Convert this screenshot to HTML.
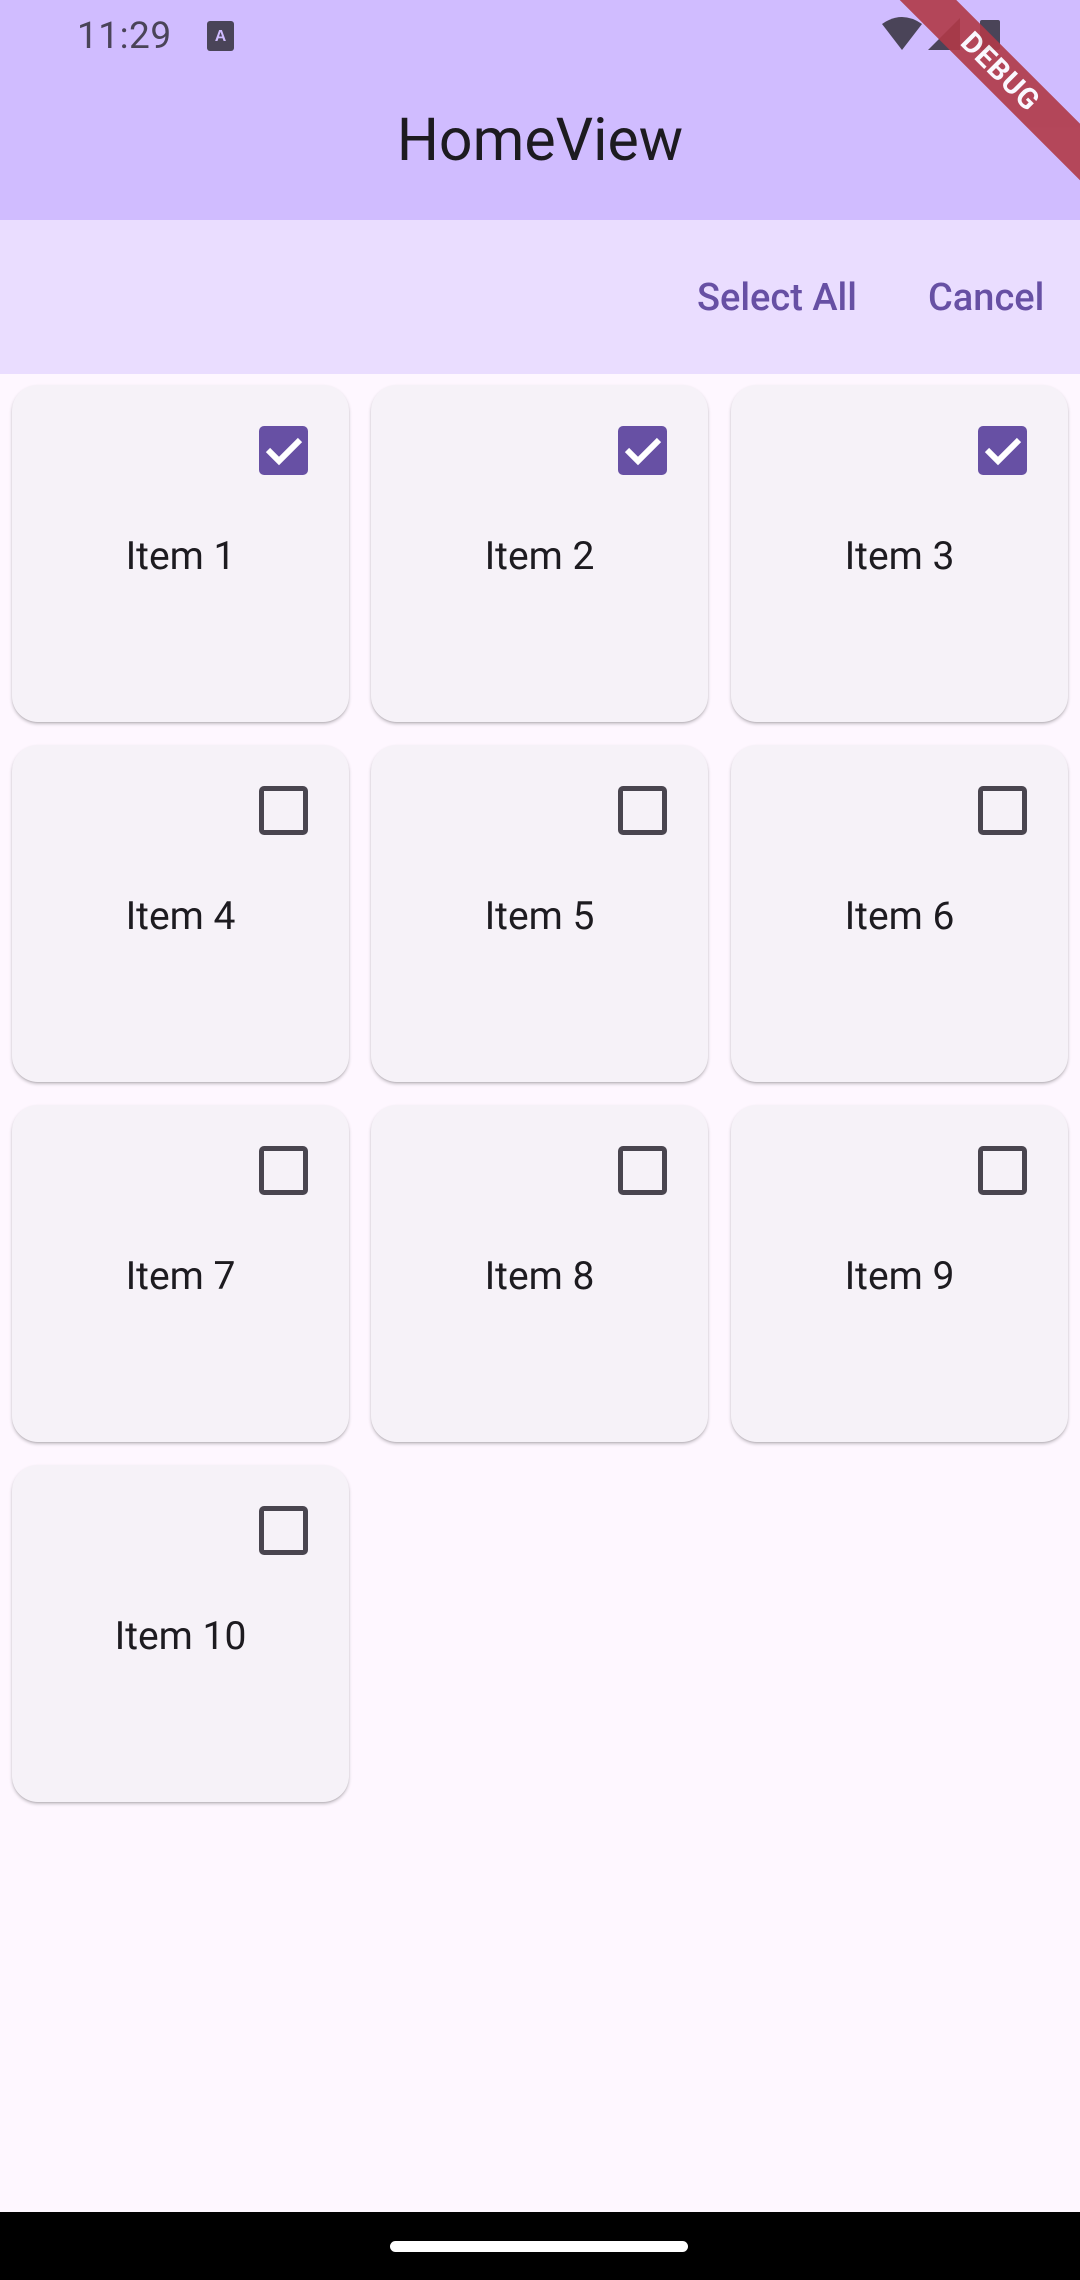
<!DOCTYPE html>
<html><head><meta charset="utf-8"><style>
*{margin:0;padding:0;box-sizing:border-box}
body{width:1080px;height:2280px;background:#FEF7FF;position:relative;overflow:hidden;font-family:"Roboto","Liberation Sans",sans-serif}
.appbar{position:absolute;left:0;top:0;width:1080px;height:220px;background:#D0BCFF}
.time{position:absolute;left:77px;top:15px;font-size:37px;color:#4A4458;letter-spacing:0.5px}
.title{position:absolute;left:0;width:1080px;top:101px;text-align:center;font-size:59px;color:#1D1B20;line-height:80px}
.bar{position:absolute;left:0;top:220px;width:1080px;height:154px;background:#EADDFF}
.btn{position:absolute;top:273px;font-size:38px;font-weight:500;color:#6750A4;line-height:50px}
.card{position:absolute;width:337px;height:337px;background:#F6F2F8;border-radius:26px;box-shadow:0 2px 3px rgba(0,0,0,0.22),0 1px 1px rgba(0,0,0,0.08)}
.card .lbl{position:absolute;left:0;width:100%;top:147px;text-align:center;font-size:39px;color:#1D1B20;line-height:48px}
.cb{position:absolute;left:247px;top:41px;width:49px;height:49px;border-radius:5px}
.cb.off{border:5px solid #49454F}
.cb.on{background:#6750A4}
.nav{position:absolute;left:0;top:2212px;width:1080px;height:68px;background:#000}
.pill{position:absolute;left:390px;top:2241px;width:298px;height:11px;border-radius:6px;background:#fff}
.banner{position:absolute;right:-80px;top:52px;width:320px;height:40px;background:#B03A48;transform:rotate(45deg);color:#fff;font-weight:bold;font-size:29px;text-align:center;line-height:40px;letter-spacing:1px;opacity:0.9}
</style></head><body>
<div class="appbar"></div>
<div class="time">11:29</div>
<svg style="position:absolute;left:207px;top:21px" width="27" height="30" viewBox="0 0 27 30"><rect x="0" y="0" width="27" height="30" rx="3" fill="#4A4458"/><text x="13.5" y="20" font-size="16" font-family="Liberation Sans" font-weight="bold" fill="#D0BCFF" text-anchor="middle">A</text></svg>
<svg style="position:absolute;left:880px;top:16px" width="120" height="36" viewBox="0 0 120 36"><path d="M2 8 Q22 -6 42 8 L22 34 Z" fill="#4A4458"/><path d="M48 34 L80 2 L80 34 Z" fill="#4A4458"/><rect x="100" y="4" width="20" height="30" rx="2" fill="#4A4458"/></svg>
<div class="banner">DEBUG</div>
<div class="title">HomeView</div>
<div class="bar"></div>
<div class="btn" style="left:697px">Select All</div>
<div class="btn" style="left:928px">Cancel</div>

<div class="card" style="left:12px;top:385px"><div class="cb on"><svg width="49" height="49" viewBox="0 0 49 49"><path d="M9 24 L20 35 L41 14" stroke="#fff" stroke-width="6" fill="none"/></svg></div><div class="lbl">Item 1</div></div>
<div class="card" style="left:371px;top:385px"><div class="cb on"><svg width="49" height="49" viewBox="0 0 49 49"><path d="M9 24 L20 35 L41 14" stroke="#fff" stroke-width="6" fill="none"/></svg></div><div class="lbl">Item 2</div></div>
<div class="card" style="left:731px;top:385px"><div class="cb on"><svg width="49" height="49" viewBox="0 0 49 49"><path d="M9 24 L20 35 L41 14" stroke="#fff" stroke-width="6" fill="none"/></svg></div><div class="lbl">Item 3</div></div>

<div class="card" style="left:12px;top:745px"><div class="cb off"></div><div class="lbl">Item 4</div></div>
<div class="card" style="left:371px;top:745px"><div class="cb off"></div><div class="lbl">Item 5</div></div>
<div class="card" style="left:731px;top:745px"><div class="cb off"></div><div class="lbl">Item 6</div></div>

<div class="card" style="left:12px;top:1105px"><div class="cb off"></div><div class="lbl">Item 7</div></div>
<div class="card" style="left:371px;top:1105px"><div class="cb off"></div><div class="lbl">Item 8</div></div>
<div class="card" style="left:731px;top:1105px"><div class="cb off"></div><div class="lbl">Item 9</div></div>

<div class="card" style="left:12px;top:1465px"><div class="cb off"></div><div class="lbl">Item 10</div></div>

<div class="nav"></div>
<div class="pill"></div>
</body></html>
